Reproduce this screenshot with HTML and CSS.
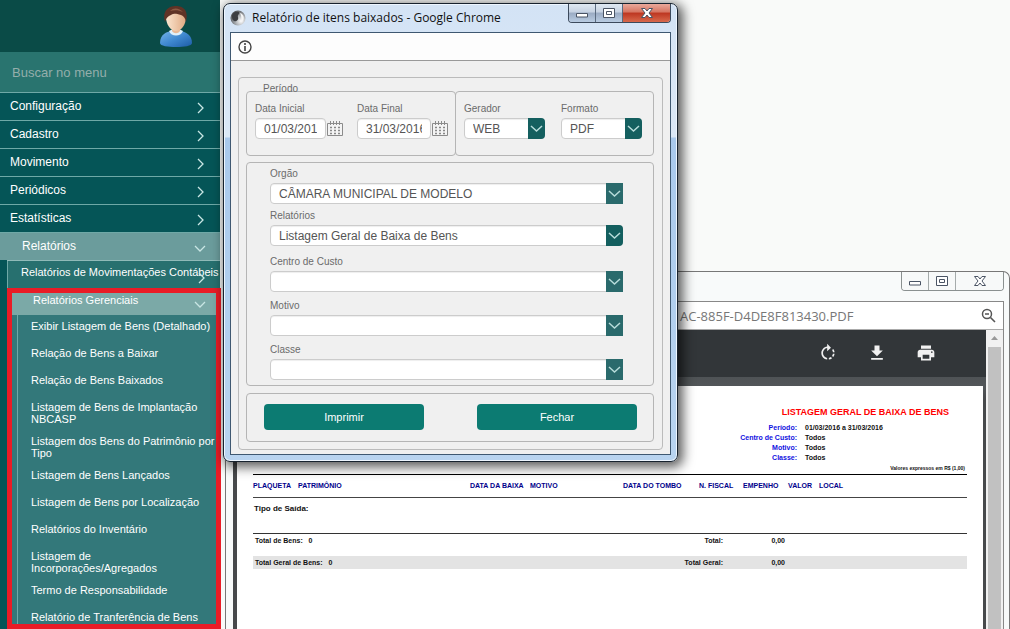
FILE: index.html
```html
<!DOCTYPE html>
<html lang="pt-BR">
<head>
<meta charset="utf-8">
<meta name="viewport" content="width=device-width, initial-scale=1">
<title>Relatório de itens baixados</title>
<link rel="stylesheet" href="styles.css">
</head>
<body>
<svg class="defs" aria-hidden="true">
  <symbol id="right" viewBox="0 0 14 14"><path d="M4 2l5 5-5 5" fill="none" stroke="currentColor" stroke-width="1.3"/></symbol>
  <symbol id="down" viewBox="0 0 14 14"><path d="M1 5l5 5 5-5" fill="none" stroke="currentColor" stroke-width="1.3"/></symbol>
  <symbol id="drop" viewBox="0 0 17 21"><path d="M3 8l5.500 5L14 8" fill="none" stroke="currentColor" stroke-width="1.500"/></symbol>
  <symbol id="calendar" viewBox="0 0 17 17"><path d="M.5 3.500h15v12H.5z" fill="#f4f4f4" stroke="#8b8b8b"/><path d="M3.500 1v4M6.500 1v4M9.500 1v4M12.500 1v4" stroke="#8b8b8b"/><path d="M3 7.500h10M3 10.500h10M3 13.500h10" stroke="#888" stroke-width="1.500" stroke-dasharray="2 2"/></symbol>
  <symbol id="min" viewBox="0 0 14 14"><path d="M1.500 7.500h11v3.500h-11z" fill="#fff" stroke="#4a5464"/></symbol>
  <symbol id="max" viewBox="0 0 14 14"><path d="M1.500 2.500h11v9h-11z" fill="#fff" stroke="#4a5464"/><path d="M4.500 5.500h5v3h-5z" fill="none" stroke="#4a5464"/></symbol>
  <symbol id="close" viewBox="0 0 14 14"><path d="M1.500 2.500h3.500l2 2.500 2-2.500h3.500L9 7l3.500 4.500H9L7 9l-2 2.500H1.500L5 7z" fill="#fff" stroke="#4a5464"/></symbol>
</svg>
<div class="app">
  <aside class="sidebar">
    <header class="profile">
      <svg class="avatar" viewBox="0 0 34 44" role="img" aria-label="Usuário">
        <defs>
          <linearGradient id="shirt" x1="0" x2="1" y1="0" y2="1"><stop offset="0" stop-color="#76b4e8"/><stop offset=".5" stop-color="#3f88cf"/><stop offset="1" stop-color="#1c5ba6"/></linearGradient>
          <linearGradient id="skin" x1="0" x2="1"><stop offset="0" stop-color="#fbe6d0"/><stop offset="1" stop-color="#e0a982"/></linearGradient>
        </defs>
        <path d="M1 38C1 29 8 27 12 26h10c5 1 11 4 11 12 0 3-8 4-16 4S1 41 1 38z" fill="url(#shirt)"/>
        <path d="M10 26c2 6 12 6 14 0l-4-2h-6z" fill="#dff0fb"/>
        <path d="M13 20h8v6c-2 3-6 3-8 0z" fill="#e8b996"/>
        <path d="M7 12C7 3 27 3 27 12c0 8-5 14-10 14S7 20 7 12z" fill="url(#skin)"/>
        <path d="M6 17C3 5 10 1 17 1s13 4 10 16c-1-4-2-6-5-7-5-1-6-2-10 0-3 1-5 3-6 7z" fill="#5f3326"/>
        <path d="M11 6c4-4 9-3 13 1-5-2-8-2-13-1z" fill="#8d5b45"/>
      </svg>
    </header>
    <input class="search" type="text" placeholder="Buscar no menu" aria-label="Buscar no menu">
    <nav>
      <a class="item" href="#">Configuração<svg class="chev"><use href="#right"/></svg></a>
      <a class="item" href="#">Cadastro<svg class="chev"><use href="#right"/></svg></a>
      <a class="item" href="#">Movimento<svg class="chev"><use href="#right"/></svg></a>
      <a class="item" href="#">Periódicos<svg class="chev"><use href="#right"/></svg></a>
      <a class="item" href="#">Estatísticas<svg class="chev"><use href="#right"/></svg></a>
      <a class="item item-open" href="#">Relatórios<svg class="chev"><use href="#down"/></svg></a>
      <div class="submenu">
        <a class="subitem" href="#">Relatórios de Movimentações Contábeis<svg class="chev"><use href="#right"/></svg></a>
        <div class="highlight">
          <a class="subitem subitem-open" href="#">Relatórios Gerenciais<svg class="chev"><use href="#down"/></svg></a>
          <ul class="reports">
            <li><a href="#">Exibir Listagem de Bens (Detalhado)</a></li>
            <li><a href="#">Relação de Bens a Baixar</a></li>
            <li><a href="#">Relação de Bens Baixados</a></li>
            <li><a href="#">Listagem de Bens de Implantação NBCASP</a></li>
            <li><a href="#">Listagem dos Bens do Patrimônio por Tipo</a></li>
            <li><a href="#">Listagem de Bens Lançados</a></li>
            <li><a href="#">Listagem de Bens por Localização</a></li>
            <li><a href="#">Relatórios do Inventário</a></li>
            <li><a href="#">Listagem de Incorporações/Agregados</a></li>
            <li><a href="#">Termo de Responsabilidade</a></li>
            <li><a href="#">Relatório de Tranferência de Bens</a></li>
          </ul>
        </div>
      </div>
    </nav>
  </aside>

  <main class="desktop">
    <section class="viewer" aria-label="Visualizador de PDF">
      <div class="viewer-title">
        <div class="controls controls-plain">
          <button type="button" aria-label="Minimizar"><svg><use href="#min"/></svg></button>
          <button type="button" aria-label="Maximizar"><svg><use href="#max"/></svg></button>
          <button type="button" class="close" aria-label="Fechar janela"><svg><use href="#close"/></svg></button>
        </div>
      </div>
      <div class="viewer-body">
        <div class="address">
          <span class="url">AC-885F-D4DE8F813430.PDF</span>
          <svg class="lens" viewBox="0 0 16 16"><circle cx="6" cy="6" r="4.500" fill="none" stroke="#555" stroke-width="1.500"/><path d="M4 6h4M9.500 9.500l4.500 4.500" stroke="#555" stroke-width="1.600"/></svg>
        </div>
        <div class="pdf">
          <div class="pdf-main">
            <div class="toolbar">
              <button type="button" aria-label="Girar"><svg viewBox="0 0 24 24"><path d="M15.550 5.550 11 1v3.070C7.060 4.560 4 7.920 4 12s3.050 7.440 7 7.930v-2.020c-2.840-.48-5-2.940-5-5.910s2.160-5.430 5-5.910V10zM19.930 11c-.17-1.390-.72-2.730-1.620-3.890l-1.420 1.420c.54.75.88 1.600 1.020 2.470zM13 17.900v2.020c1.390-.17 2.740-.71 3.900-1.610l-1.440-1.440c-.75.54-1.590.89-2.460 1.030zm3.890-2.420 1.420 1.410c.9-1.160 1.450-2.500 1.620-3.890h-2.020c-.14.870-.48 1.720-1.020 2.480z" fill="#f1f1f1"/></svg></button>
              <button type="button" aria-label="Baixar"><svg viewBox="0 0 24 24"><path d="M19 9h-4V3H9v6H5l7 7zM5 18v2h14v-2z" fill="#f1f1f1"/></svg></button>
              <button type="button" aria-label="Imprimir PDF"><svg viewBox="0 0 24 24"><path d="M19 8H5c-1.660 0-3 1.340-3 3v6h4v4h12v-4h4v-6c0-1.660-1.340-3-3-3zm-3 11H8v-5h8zm3-7c-.55 0-1-.45-1-1s.45-1 1-1 1 .45 1 1-.45 1-1 1zm-1-9H6v4h12z" fill="#f1f1f1"/></svg></button>
            </div>
            <div class="page">
              <header class="report-head">
                <h1>LISTAGEM GERAL DE BAIXA DE BENS</h1>
                <dl>
                  <dt>Período:</dt><dd>01/03/2016 a 31/03/2016</dd>
                  <dt>Centro de Custo:</dt><dd>Todos</dd>
                  <dt>Motivo:</dt><dd>Todos</dd>
                  <dt>Classe:</dt><dd>Todos</dd>
                </dl>
                <p>Valores expressos em R$ (1,00)</p>
              </header>
              <table class="columns">
                <colgroup><col class="c45"><col class="c172"><col class="c60"><col class="c93"><col class="c76"><col class="c44"><col class="c45"><col class="c31"><col></colgroup>
                <tr><th>PLAQUETA</th><th>PATRIMÔNIO</th><th>DATA DA BAIXA</th><th>MOTIVO</th><th>DATA DO TOMBO</th><th>N. FISCAL</th><th>EMPENHO</th><th>VALOR</th><th>LOCAL</th></tr>
              </table>
              <h2>Tipo de Saída:</h2>
              <table class="totals">
                <colgroup><col><col class="c62"><col class="c182"></colgroup>
                <tr><td><span class="spread"><span>Total de Bens: &nbsp; 0</span><span>Total:</span></span></td><td class="num">0,00</td><td></td></tr>
                <tr class="gap"><td colspan="3"></td></tr>
                <tr class="grand"><td><span class="spread"><span>Total Geral de Bens: &nbsp; 0</span><span>Total Geral:</span></span></td><td class="num">0,00</td><td></td></tr>
              </table>
            </div>
          </div>
          <div class="scroll" aria-hidden="true"><svg viewBox="0 0 17 17"><path d="M5 10l3.500-4L12 10z" fill="#999"/></svg><div class="thumb"></div></div>
        </div>
      </div>
    </section>

    <section class="dialog" aria-label="Relatório de itens baixados">
      <div class="dialog-title">
        <svg class="globe" viewBox="0 0 16 16"><defs><radialGradient id="ball" cx=".7" cy=".7" r=".8"><stop offset="0" stop-color="#fff"/><stop offset=".5" stop-color="#a5a9ad"/><stop offset="1" stop-color="#4a4c50"/></radialGradient></defs><circle cx="8" cy="8" r="7.500" fill="url(#ball)"/><path d="M2 6c0-4 5-5 7-4 1 2-2 3-1 5 1 3-2 5-4 4C2 10 2 8 2 6z" fill="#3c3e42"/><path d="M10 3c4 1 5 6 2 9-1-3 0-5-2-9z" fill="#f4f4f4"/></svg>
        <span class="caption">Relatório de itens baixados - Google Chrome</span>
        <div class="controls">
          <button type="button" aria-label="Minimizar"><svg><use href="#min"/></svg></button>
          <button type="button" aria-label="Maximizar"><svg><use href="#max"/></svg></button>
          <button type="button" class="close close-red" aria-label="Fechar janela"><svg><use href="#close"/></svg></button>
        </div>
      </div>
      <div class="dialog-body">
        <div class="infobar"><svg viewBox="0 0 14 14"><circle cx="7" cy="7" r="6" fill="none" stroke="#444" stroke-width="1.400"/><path d="M7 6v5M7 3v2" stroke="#444" stroke-width="1.600"/></svg></div>
        <form class="form">
          <div class="panel">
            <div class="top-row">
              <fieldset class="box period">
                <legend>Período</legend>
                <div class="field"><label for="d1">Data Inicial</label><div class="date"><input id="d1" class="from" type="text" value="01/03/2016"><button type="button" aria-label="Abrir calendário inicial"><svg><use href="#calendar"/></svg></button></div></div>
                <div class="field"><label for="d2">Data Final</label><div class="date"><input id="d2" class="to" type="text" value="31/03/2016"><button type="button" aria-label="Abrir calendário final"><svg><use href="#calendar"/></svg></button></div></div>
              </fieldset>
              <fieldset class="box output">
                <div class="field"><label for="g">Gerador</label><div class="select short"><select id="g"><option>WEB</option></select><svg class="round"><use href="#drop"/></svg></div></div>
                <div class="field"><label for="f">Formato</label><div class="select short"><select id="f"><option>PDF</option></select><svg class="round"><use href="#drop"/></svg></div></div>
              </fieldset>
            </div>
            <fieldset class="box filters">
              <div class="pair">
                <div class="field"><label for="o">Orgão</label><div class="select"><select id="o"><option>CÂMARA MUNICIPAL DE MODELO</option></select><svg><use href="#drop"/></svg></div></div>
                <div class="field"><label for="r">Relatórios</label><div class="select"><select id="r"><option>Listagem Geral de Baixa de Bens</option></select><svg class="round"><use href="#drop"/></svg></div></div>
              </div>
              <div class="trio">
                <div class="field"><label for="c">Centro de Custo</label><div class="select"><select id="c"><option></option></select><svg><use href="#drop"/></svg></div></div>
                <div class="field"><label for="m">Motivo</label><div class="select"><select id="m"><option></option></select><svg><use href="#drop"/></svg></div></div>
                <div class="field"><label for="k">Classe</label><div class="select"><select id="k"><option></option></select><svg><use href="#drop"/></svg></div></div>
              </div>
            </fieldset>
            <div class="box actions">
              <button type="button">Imprimir</button>
              <button type="button">Fechar</button>
            </div>
          </div>
        </form>
      </div>
    </section>
  </main>
</div>
</body>
</html>
```
FILE: styles.css
```css
* { box-sizing: border-box; }
body { margin: 0; font-family: "Liberation Sans", Arial, sans-serif; overflow: hidden; }
a { color: inherit; text-decoration: none; }
button { padding: 0; border: 0; background: none; font-family: inherit; cursor: pointer; }
fieldset { margin: 0; min-width: 0; }
svg { display: block; }
.defs { display: none; }
.app { display: flex; min-height: 100vh; }

/* Sidebar */
.sidebar { flex: 0 0 220px; min-width: 0; display: flex; flex-direction: column; background: #055557; color: #fff; }
.profile { display: flex; justify-content: flex-end; padding: 5px 27px 3px 0; background: #0a4b47; }
.avatar { width: 34px; height: 44px; }
.search { width: 100%; height: 40px; padding: 0 12px; border: 0; background: #29746f; color: #fff; font: 13px "Liberation Sans", Arial, sans-serif; }
.search::placeholder { color: #94aeab; opacity: 1; }
.item { display: flex; justify-content: space-between; height: 28px; padding: 0 12px 0 10px; border-top: 1px solid #6fa9a7; font-size: 12px; line-height: 26px; }
.item-open { padding-left: 22px; background: #6b9c9c; }
.chev { width: 14px; height: 14px; flex: none; align-self: flex-end; margin-bottom: 5px; color: #c9e6e4; }
.submenu { margin-left: 7px; border-top: 1px solid #8fbab8; background: #27706f; }
.subitem { display: flex; justify-content: space-between; height: 27px; padding: 0 0 0 14px; font-size: 11px; line-height: 22px; white-space: nowrap; }
.submenu > .subitem { border-left: 1px solid #6fa9a7; padding-left: 13px; }
.submenu > .subitem .chev { margin: 0 12px 3px -24px; }
.highlight { position: relative; z-index: 1; margin-right: -1px; border: 5px solid #e91c26; background: #33787a; }
.subitem-open { height: 22px; padding: 0 8px 0 21px; background: #7ba9a7; line-height: 14px; }
.subitem-open .chev { margin-bottom: 4px; }
.reports { list-style: none; margin: 0 0 0 5px; padding: 0; border-left: 1px solid #6fa9a7; }
.reports li { min-height: 27px; padding: 5px 0 5px 13px; font-size: 11px; line-height: 12px; }
.reports li:last-child { min-height: 0; padding-bottom: 1px; }

/* Desktop */
.desktop { position: relative; flex: 1; min-width: 0; background: #f9faf9; }

/* Window buttons */
.controls { display: flex; height: 19px; border: 1px solid #3c4a5c; border-top: 0; border-radius: 0 0 4px 4px; overflow: hidden; }
.controls button { display: grid; place-items: center; width: 27px; border-right: 1px solid #5a6b80; background: linear-gradient(#dfe8f2, #c6d2e2 45%, #9aabc3 50%, #b9cce2); }
.controls svg { width: 14px; height: 14px; }
.controls .close { width: 47px; border-right: 0; }
.controls .close-red { background: linear-gradient(#e9a99b, #d67562 45%, #bd3621 50%, #d8694c); }
.controls-plain { border-color: #8a9090; }
.controls-plain button { border-color: #a5abab; background: #f7f9f9; }

/* PDF window */
.viewer { position: absolute; inset: 271px 0 0 5px; display: flex; flex-direction: column; padding: 0 5px 0 7px; border: 1px solid #777; border-bottom: 0; border-radius: 0 7px 0 0; background: #f8fafa; }
.viewer-title { display: flex; justify-content: flex-end; height: 29px; }
.viewer-body { flex: 1; display: flex; flex-direction: column; border: 1px solid #888; border-bottom: 0; border-left: 0; min-height: 0; }
.address { display: flex; align-items: center; justify-content: space-between; height: 28px; padding: 0 6px 0 447px; border-bottom: 1px solid #aaa; background: #fff; color: #777; font: 13px/20px "Open Sans", sans-serif; }
.lens { width: 16px; height: 16px; }
.pdf { flex: 1; display: flex; min-height: 0; }
.pdf-main { flex: 1; min-width: 0; display: flex; flex-direction: column; background: linear-gradient(#414446, #525659 57px, #47494b 70px); }
.toolbar { display: flex; justify-content: flex-end; gap: 29px; padding: 13px 50px 14px 0; margin-bottom: 9px; background: #323639; }
.toolbar svg { width: 20px; height: 20px; }
.scroll { flex: 0 0 17px; display: flex; flex-direction: column; background: #f1f1f1; }
.scroll svg { width: 17px; height: 17px; }
.thumb { flex: 1; margin: 0 2px; background: #c1c1c1; }
.page { flex: 1; margin: 0 3px 0 4px; padding: 20px 16px 0; background: #fff; color: #111; font-weight: bold; font-size: 7px; }
.report-head { display: grid; justify-items: end; }
.report-head h1 { margin: 0 18px 5px 0; color: #f00; font-size: 9px; line-height: 12px; }
dl { display: grid; grid-template-columns: auto 162px; column-gap: 8px; margin: 0; line-height: 10px; }
dt { text-align: right; color: #1010e0; }
dd { margin: 0; }
.report-head p { margin: 1px 2px 2px 0; font-size: 5px; line-height: 8px; }
table { width: 100%; table-layout: fixed; border-collapse: collapse; }
th, td { padding: 0; text-align: left; white-space: nowrap; }
.columns { border-top: 1px solid #000; border-bottom: 1px solid #444; color: #00008b; line-height: 22px; }
.page h2 { margin: 5px 0 18px 1px; font-size: 8px; line-height: 12px; }
.totals { border-top: 1px solid #333; line-height: 13px; }
.spread { display: flex; justify-content: space-between; padding-left: 2px; }
.num { text-align: right; }
.gap { height: 9px; line-height: 0; }
.grand { background: #e3e3e3; }
.c31 { width: 31px; } .c44 { width: 44px; } .c45 { width: 45px; } .c60 { width: 60px; } .c62 { width: 62px; }
.c76 { width: 76px; } .c93 { width: 93px; } .c172 { width: 172px; } .c182 { width: 182px; }

/* Dialog window */
.dialog { position: absolute; z-index: 2; left: 3px; top: 3px; width: 455px; padding: 0 6px 6px; border: 1px solid #17222e; border-radius: 7px; background: linear-gradient(#d3e3f5, #dbe8f6 133px, #a9c9ec 134px, #b9d4f0); box-shadow: inset 0 0 0 1px #eef6ff, 3px 3px 12px 2px rgba(0, 0, 0, .65); }
.dialog-title { display: flex; align-items: flex-start; height: 28px; }
.globe { width: 16px; height: 16px; margin: 6px 6px 0 0; }
.caption { flex: 1; font: 12px/28px "Open Sans", sans-serif; color: #111; white-space: nowrap; }
.dialog-body { border: 1px solid #3f5871; background: #f0f0f0; }
.infobar { padding: 7px; height: 28px; border-bottom: 1px solid #999; background: #fdfdfd; }
.infobar svg { width: 14px; height: 14px; }
.form { padding: 16px 7px 4px; }
.panel { padding: 13px 8px 7px 7px; border: 1px solid #bbb; border-radius: 4px; }
.box { border: 1px solid #b5b5b5; border-radius: 4px; }
.top-row { display: flex; margin-bottom: 6px; }
.period, .output { display: flex; padding: 11px 8px 16px; }
.period { position: relative; flex: 0 0 210px; gap: 13px; }
.period legend { position: absolute; left: 16px; top: -9px; padding: 0; color: #6b6b6b; font-size: 10px; line-height: 12px; }
.output { flex: 1; gap: 16px; margin-left: -1px; }
.field { display: grid; gap: 3px; }
.field label { color: #6b6b6b; font-size: 10px; line-height: 12px; }
.date { display: flex; align-items: center; gap: 1px; }
.date svg { width: 17px; height: 17px; }
.date input, select { height: 21px; border: 1px solid #ccc; border-radius: 4px; background: #fff; color: #555; font: 12px "Liberation Sans", Arial, sans-serif; box-shadow: inset 0 1px 1px #eee; }
.date input { padding: 0 8px; }
.from { width: 71px; }
.to { width: 74px; }
.select { display: grid; }
.select > * { grid-area: 1 / 1; }
.select svg { justify-self: end; width: 17px; height: 21px; background: #2a6a6c; color: #b7dcda; pointer-events: none; }
.select .round { border-radius: 0 4px 4px 0; background: #145f5f; }
select { appearance: none; width: 100%; padding: 0 20px 0 8px; }
.short { width: 81px; }
.filters { display: grid; gap: 10px; margin-bottom: 7px; padding: 5px 30px 5px 23px; }
.pair { display: grid; gap: 6px; }
.trio { display: grid; gap: 8px; }
.actions { display: flex; gap: 53px; padding: 10px 16px 11px 17px; }
.actions button { flex: 1; height: 26px; border-radius: 4px; background: #0c7b72; color: #fff; font-size: 11px; }
```
